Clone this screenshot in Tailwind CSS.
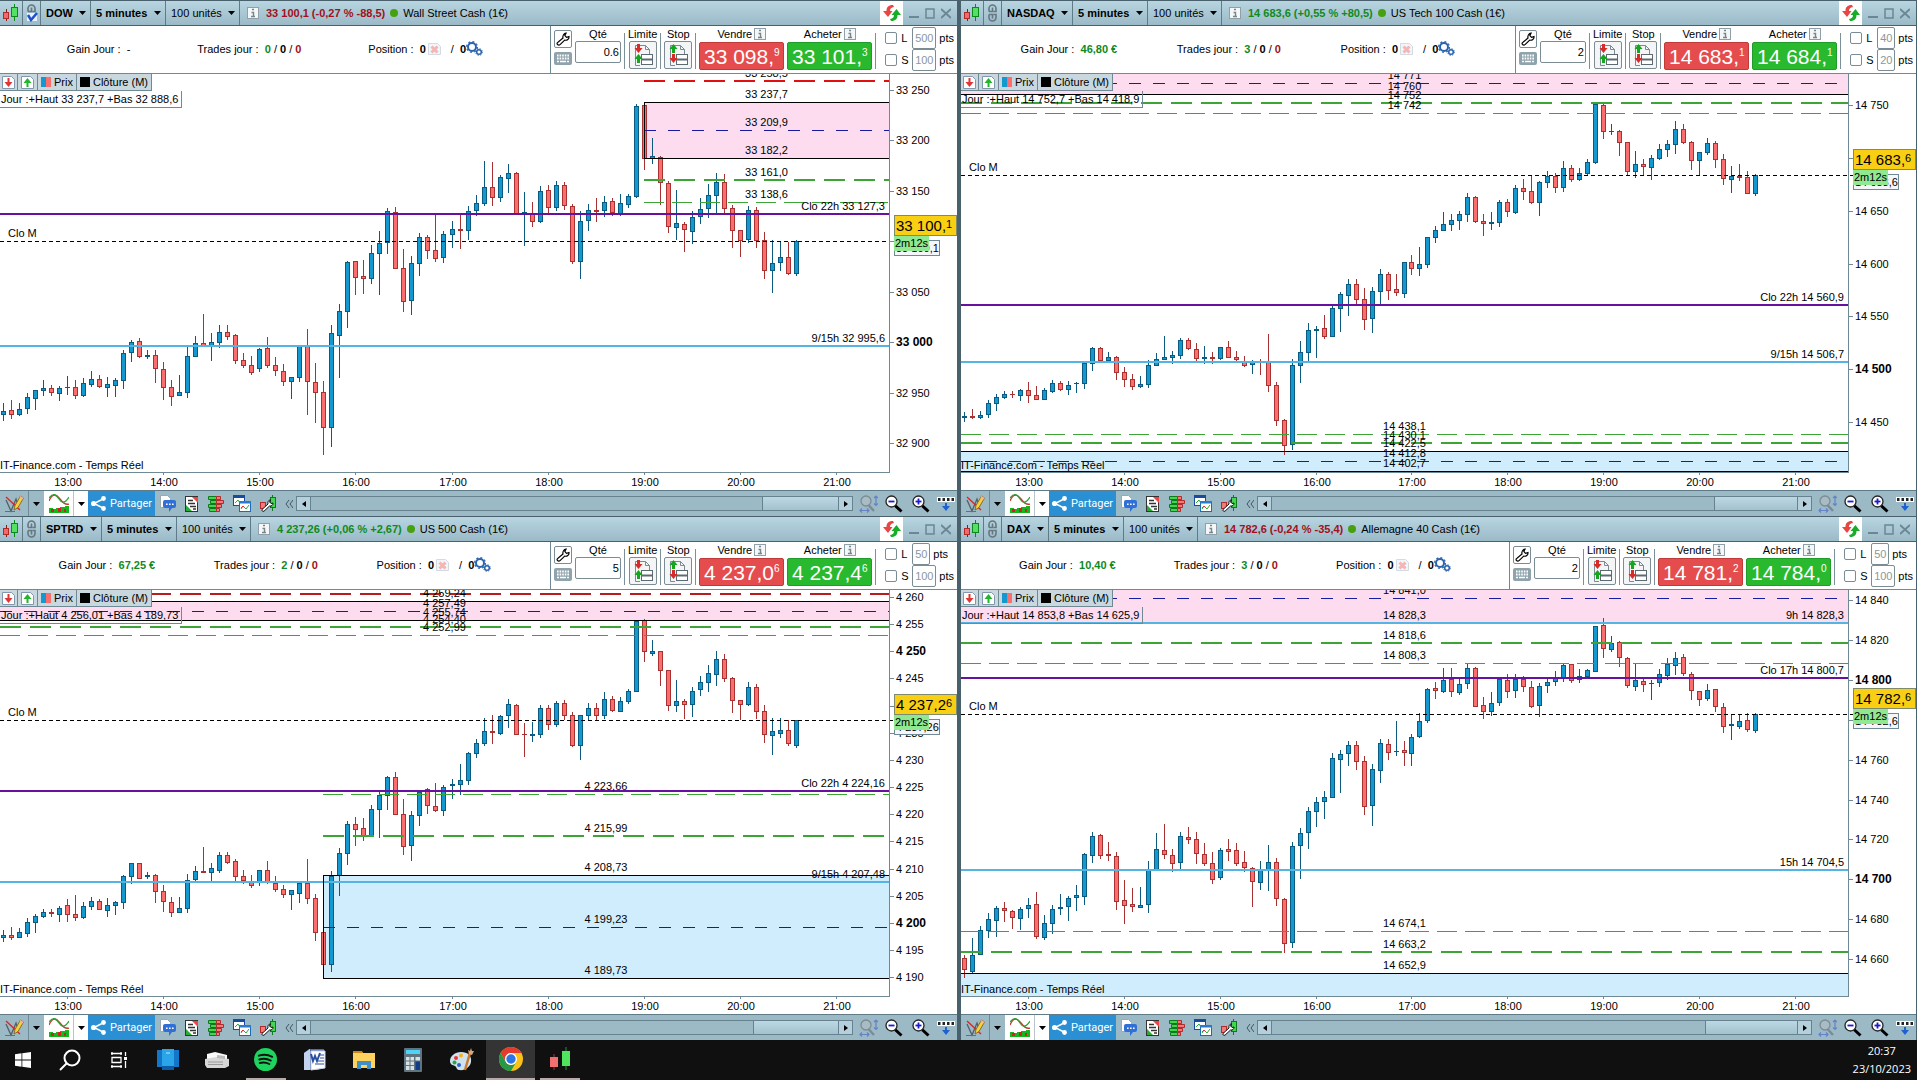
<!DOCTYPE html>
<html lang="fr">
<head>
    <meta charset="UTF-8">
    <meta name="viewport" content="width=device-width, initial-scale=1.0">
    <title>Graphiques - Temps Réel</title>
    <script src="https://cdn.jsdelivr.net/npm/@tailwindcss/browser@4"></script>
</head>
<body class="flex h-screen flex-col overflow-hidden bg-[#101010] font-['Liberation_Sans',Arial,sans-serif] text-[11px] leading-[14px] text-black">

    <!-- Icônes partagées -->
    <svg class="hidden">
        <symbol id="i-candles" viewBox="0 0 16 18">
            <path d="M4.5 5v12M12.500 1v15" stroke="#7a2020" fill="none"/>
            <path d="M12.500 0v17" stroke="#0a8a1a" fill="none"/>
            <rect x="1.500" y="8.500" width="5" height="6" fill="#f06a6a" stroke="#b02a2a"/>
            <rect x="9.500" y="3.500" width="6" height="9" fill="#55e065" stroke="#0a8a1a"/>
        </symbol>
        <symbol id="i-link" viewBox="0 0 12 18">
            <g fill="none" stroke="#66777f" stroke-width="1.600">
                <path d="M2 7.500V4.500a3.500 3.500 0 0 1 7 0v3H6.500M5.500 3.500v4H2"/>
                <path d="M2 10.500v3a3.500 3.500 0 0 0 7 0v-3H6.500M5.500 14.500v-4H2"/>
            </g>
        </symbol>
        <symbol id="i-check" viewBox="0 0 12 18">
            <path d="M2 7.500V4.500a3.500 3.500 0 0 1 7 0v3H6.500M5.500 3.500v4H2" fill="none" stroke="#66777f" stroke-width="1.600"/>
            <path d="M1 9h10v8H1z" fill="#e8f0ff"/>
            <path d="M2 11l3 5 6-7" fill="none" stroke="#1e50c8" stroke-width="2.500"/>
        </symbol>
        <symbol id="i-caret" viewBox="0 0 7 4"><path d="M0 0h7L3.500 4z" fill="#000"/></symbol>
        <symbol id="i-info" viewBox="0 0 12 12">
            <rect x=".5" y=".5" width="11" height="11" fill="#f4f6f7" stroke="#8fa0a8"/>
            <path d="M5 2.500h2M4.500 5.500H6.500V9M4 9.500h4" stroke="#76868d" stroke-width="1.400" fill="none"/>
        </symbol>
        <symbol id="i-refresh" viewBox="0 0 18 18">
            <path d="M10 1C5 1 3.500 3.500 3.500 7H0l5 6 4.500-6H7c0-2 .8-3.500 4-4z" fill="#e84545"/>
            <path d="M8 17c5 0 6.500-2.500 6.500-6H18l-4.500-6-5 6H11c0 2-.8 3.500-4 4z" fill="#18ad28"/>
        </symbol>
        <symbol id="i-gears" viewBox="0 0 17 15">
            <circle cx="6" cy="6" r="4" fill="none" stroke="#2a63ae" stroke-width="2"/>
            <circle cx="6" cy="6" r="5.400" fill="none" stroke="#2a63ae" stroke-width="1.200" stroke-dasharray="2 2.200"/>
            <circle cx="13" cy="11" r="2.300" fill="none" stroke="#2a63ae" stroke-width="1.500"/>
            <circle cx="13" cy="11" r="3.400" fill="none" stroke="#2a63ae" stroke-width=".9" stroke-dasharray="1.300 1.400"/>
        </symbol>
        <symbol id="i-cross" viewBox="0 0 13 12">
            <path d="M.5.500h9l3 3v8H.5z" fill="#f3f6f8" stroke="#d3dbe0"/>
            <path d="M3.500 3.500l6 6m0-6l-6 6" stroke="#f5b5b5" stroke-width="3"/>
        </symbol>
        <symbol id="i-wrench" viewBox="0 0 14 14">
            <path d="M1.500 12.500c-1-1 0-2 .5-2.200L7 6c-.6-2.500 1-4.500 3-4.800L8.800 3.500l1.700 1.900 2.500-.8c.2 2.400-2 4.200-4.300 3.500l-4.400 4.300c-1 .9-2 .8-2.800.1z" fill="#fff" stroke="#000" stroke-width="1.200"/>
        </symbol>
        <symbol id="i-keys" viewBox="0 0 18 13">
            <rect width="18" height="13" rx="2" fill="#8fa3ac"/>
            <path d="M3 3.500h12M3 6.500h12" stroke="#fff" stroke-width="2" stroke-dasharray="1.600 1"/>
            <path d="M3 9.500h2M6 9.500h6M13 9.500h2" stroke="#fff" stroke-width="1.600"/>
        </symbol>
        <symbol id="i-order" viewBox="0 0 24 24">
            <path d="M9 22.500H4.500v-20h10l4 4V11M14.500 2.500v4h4" fill="none" stroke="#7c8b91"/>
            <rect x="10.500" y="11.500" width="11" height="10" fill="#fff" stroke="#5d6b70"/>
            <path d="M11 16.500h10" stroke="#5d6b70" stroke-width="2"/>
        </symbol>
        <symbol id="i-limit" viewBox="0 0 24 24">
            <use href="#i-order"/>
            <path d="M6 1h3v4h2.500l-4 5-4-5H6z" fill="#d62b2b"/>
            <path d="M6 20h3v-4h2.500l-4-5-4 5H6z" fill="#16a51e"/>
        </symbol>
        <symbol id="i-stop" viewBox="0 0 24 24">
            <use href="#i-order"/>
            <path d="M6 10h3V6h2.500l-4-5-4 5H6z" fill="#16a51e"/>
            <path d="M6 11h3v4h2.500l-4 5-4-5H6z" fill="#d62b2b"/>
        </symbol>
        <symbol id="i-down" viewBox="0 0 13 13">
            <path d="M.5.500h9l3 3v9H.5z" fill="#fff" stroke="#8299ad"/>
            <path d="M5.500 2h2v4H10.500l-4 5-4-5h3z" fill="#e03535"/>
        </symbol>
        <symbol id="i-up" viewBox="0 0 13 13">
            <path d="M.5.500h9l3 3v9H.5z" fill="#fff" stroke="#8299ad"/>
            <path d="M5.500 11h2V7H10.500l-4-5-4 5h3z" fill="#25b52c"/>
        </symbol>
        <symbol id="i-draw" viewBox="0 0 19 18">
            <path d="M1 5l5 11 5-12 2 6" fill="none" stroke="#51606a" stroke-width="1.300"/>
            <path d="M1 2l14 13" stroke="#d22" stroke-width="1.300"/>
            <path d="M9 15l1-4.500L15.500 1l3 2L13 12.500z" fill="#f6d040" stroke="#7a5a10" stroke-width=".8"/>
            <path d="M15.500 1l3 2-1 1.600-3-2z" fill="#f4b2a0"/>
            <path d="M0 16.500h10" stroke="#2a9a32"/>
        </symbol>
        <symbol id="i-indic" viewBox="0 0 20 19">
            <path d="M0 7c4-9 8-6 11-2s6 6 9 5" fill="none" stroke="#c33" stroke-width="1.300"/>
            <path d="M0 4c4-5 7-4 10 1s6 4 10-2" fill="none" stroke="#2aa235" stroke-width="1.300"/>
            <path d="M0 19v-5h4v1h3v-1h4v-1h5v-1h4v7z" fill="#15b51e"/>
            <path d="M2 15h3v3H2zM9 14h3v4H9zM15 15h2v3h-2z" fill="#d62020"/>
        </symbol>
        <symbol id="i-share" viewBox="0 0 15 15">
            <path d="M13 2.500L3 7.500l10 5" fill="none" stroke="#fff" stroke-width="1.500"/>
            <circle cx="12.500" cy="2.500" r="2.400" fill="#fff"/><circle cx="2.600" cy="7.500" r="2.600" fill="#fff"/><circle cx="12.500" cy="12.500" r="2.400" fill="#fff"/>
        </symbol>
        <symbol id="i-chat" viewBox="0 0 16 17">
            <path d="M.5.500h7l3 3v9H.5z" fill="#fff" stroke="#9aaab2"/>
            <path d="M5 5h9a2 2 0 0 1 2 2v4a2 2 0 0 1-2 2h-2l-3 4v-4H5a2 2 0 0 1-2-2V7a2 2 0 0 1 2-2z" fill="#2f6fd6"/>
            <path d="M6 9.200h8" stroke="#fff" stroke-width="1.600" stroke-dasharray="1.600 1.400"/>
        </symbol>
        <symbol id="i-list" viewBox="0 0 14 16">
            <rect x=".5" y=".5" width="12" height="15" fill="#fff" stroke="#333"/>
            <path d="M7 1h6v6z" fill="#e44"/><path d="M1 15v-6l6 6z" fill="#2aab35"/>
            <path d="M3 4.500h5M3 7.500h7M5 10.500h6M8 13h3" stroke="#333" stroke-width="1.300"/>
        </symbol>
        <symbol id="i-book" viewBox="0 0 16 16">
            <path d="M.5.500h8v3h-8zM2.500 4.500h6v3h-6zM.5 8.500h8v3h-8zM1.500 12.500h7v3h-7z" fill="#46d552" stroke="#0d7a1b"/>
            <path d="M8.500.500h4v3h-4zM8.500 4.500h7v3h-7zM8.500 8.500h5v3h-5zM8.500 12.500h3v3h-3z" fill="#f37a7a" stroke="#b22a2a"/>
        </symbol>
        <symbol id="i-wins" viewBox="0 0 18 17">
            <rect x=".5" y=".5" width="11" height="10" fill="#fff" stroke="#1a4b9c"/><path d="M0 0h12v3H0z" fill="#1a4b9c"/>
            <path d="M2 8l3-3 2 3" fill="none" stroke="#2aab35"/>
            <rect x="6.500" y="6.500" width="11" height="10" fill="#fff" stroke="#1a6bb8"/><path d="M6 6h12v2.500H6z" fill="#2a7bd0"/>
            <path d="M8 14l2-3 3 3 3-4" fill="none" stroke="#2aab35"/><path d="M8 13l2-2 1 1" fill="none" stroke="#d33"/>
        </symbol>
        <symbol id="i-tool" viewBox="0 0 16 17">
            <rect x=".5" y="7.500" width="5" height="6" fill="#f37a7a" stroke="#b22a2a"/>
            <path d="M12.500 0v16" stroke="#0d7a1b"/><rect x="10.500" y="2.500" width="5" height="10" fill="#46d552" stroke="#0d7a1b"/>
            <path d="M2 14.500L8 9c-.5-2 .5-4 2.500-4.200L9.500 7l1.500 1.500L13 8c.2 2-1.500 3.500-3.500 3L4 16.200c-1.500.6-2.500-.7-2-1.700z" fill="#fff" stroke="#000" stroke-width=".9"/>
        </symbol>
        <symbol id="i-fit" viewBox="0 0 19 18">
            <path d="M9 9.500l6 6.500" stroke="#7b8c94" stroke-width="2.500"/>
            <circle cx="7" cy="6" r="5" fill="#a9bcc5" stroke="#7b8c94" stroke-width="1.300"/>
            <path d="M17 1v9M15 3l2-2 2 2M15 8.500l2 2 2-2M1 15.500h9M3 13.500l-2 2 2 2M8 13.500l2 2-2 2" fill="none" stroke="#6483c8" stroke-width="1.200"/>
        </symbol>
        <symbol id="i-lens" viewBox="0 0 18 18">
            <path d="M10 10.500l6.500 6" stroke="#000" stroke-width="3"/>
            <circle cx="6.500" cy="6.500" r="5.500" fill="#fff" stroke="#222" stroke-width="1.300"/>
            <path d="M3.500 6.500h6" stroke="#1a1ad0" stroke-width="1.800"/>
        </symbol>
        <symbol id="i-lens-plus" viewBox="0 0 18 18"><use href="#i-lens"/><path d="M6.500 3.500v6" stroke="#1a1ad0" stroke-width="1.800"/></symbol>
        <symbol id="i-dock" viewBox="0 0 18 14">
            <rect width="18" height="5" fill="#fff"/><path d="M1 2.500h16" stroke="#222" stroke-width="3" stroke-dasharray="2.500 2"/>
            <path d="M8 6h2v3h3l-4 5-4-5h3z" fill="#1c62d0"/>
        </symbol>
    </svg>

    <main id="desk" class="grid min-h-0 flex-1 grid-cols-[959fr_958fr] grid-rows-[516fr_524fr] bg-white"></main>

    <!-- Barre des tâches -->
    <footer class="flex h-10 shrink-0 items-stretch bg-[#101010] text-white">
        <button aria-label="Démarrer" class="flex w-[45px] items-center justify-center">
            <svg class="h-4 w-4" viewBox="0 0 16 16" fill="#fff"><path d="M0 2.200l6.500-.9v6.300H0zM7.300 1.200L16 0v7.600H7.300zM0 8.400h6.500v6.300L0 13.800zM7.300 8.400H16V16l-8.700-1.200z"/></svg>
        </button>
        <button aria-label="Rechercher" class="flex w-[49px] items-center justify-center">
            <svg class="h-6 w-6" viewBox="0 0 24 24" fill="none" stroke="#fff" stroke-width="2"><circle cx="14" cy="10" r="7.500"/><path d="M8.500 15.500L2 22"/></svg>
        </button>
        <button aria-label="Vue des tâches" class="flex w-[49px] items-center justify-center">
            <svg class="h-4 w-4" viewBox="0 0 16 16" fill="none" stroke="#fff" stroke-width="1.300"><path d="M0 1.500h11M0 14.500h11M1 0v3M10 0v3M1 13v3M10 13v3M1 5.500h9v5H1zM14.500 0v4M14.500 9v7"/><path d="M13 5h3v3h-3z" fill="#fff" stroke="none"/></svg>
        </button>
        <button aria-label="Ordinateur" class="flex w-[49px] items-center justify-center">
            <svg class="h-[22px] w-[22px]" viewBox="0 0 22 22"><path d="M0 1h22v14l1 3H0z" fill="#1476c8"/><rect x="5" width="12" height="17" fill="#2aa5ea"/><rect x="5" y="17" width="12" height="4" fill="#0b5da8"/><path d="M9 4h4" stroke="#bfe6ff"/></svg>
        </button>
        <button aria-label="Imprimante" class="flex w-[49px] items-center justify-center">
            <svg class="h-[22px] w-6" viewBox="0 0 24 22"><path d="M2 5l8-2 12 3v5H2z" fill="#fafafa"/><path d="M0 10l12-2 12 2v7l-4 2H2l-2-3z" fill="#d7d7d7"/><path d="M3 13h15M3 15.500h15" stroke="#9a9a9a"/><path d="M12 6l8 1v3l-8-1z" fill="#bbb"/></svg>
        </button>
        <button aria-label="Spotify" class="flex w-[49px] items-center justify-center">
            <span class="flex h-full w-10 items-center justify-center border-b-2 border-[#b9aaa8]">
                <svg class="h-[23px] w-[23px]" viewBox="0 0 24 24"><circle cx="12" cy="12" r="12" fill="#1ed45f"/><path d="M5 8c5-1.500 10-1 14 1.200M5.500 12c4.500-1.300 8.500-.8 12 1.100M6 15.700c3.500-1 7-.6 10 1" fill="none" stroke="#101010" stroke-width="2" stroke-linecap="round"/></svg>
            </span>
        </button>
        <button aria-label="Word" class="flex w-[49px] items-center justify-center">
            <svg class="h-[22px] w-[23px]" viewBox="0 0 23 22"><path d="M1 4l5-4h15v18l-6 3H1z" fill="#4b6cb4"/><path d="M8 2h14v17L8 21z" fill="#fff" stroke="#c9d4ea"/><path d="M8 5l2 7 2-5 2 5 3-8" fill="none" stroke="#2b4f9e" stroke-width="2"/><path d="M17 6h4M17 9h4M15 12h6M12 15h9" stroke="#2b4f9e"/><path d="M1 4l6-4v21H1z" fill="#c5d2ee"/></svg>
        </button>
        <button aria-label="Explorateur de fichiers" class="flex w-[49px] items-center justify-center">
            <svg class="h-5 w-[22px]" viewBox="0 0 22 20"><path d="M0 1h9l2 3H0z" fill="#c78a17"/><path d="M0 3h22v15H0z" fill="#fbd35e"/><path d="M4 19v-8h14v8h-4v-4H8v4z" fill="#3f8fc9"/></svg>
        </button>
        <button aria-label="Calculatrice" class="flex w-[49px] items-center justify-center">
            <svg class="h-6 w-[18px]" viewBox="0 0 18 24"><rect width="18" height="24" rx="1" fill="#5f7480"/><rect x="2" y="2" width="14" height="4" fill="#4fd3f5"/><path d="M2 9h3.500v3.500H2zM6.500 9H10v3.500H6.500zM2 13.500h3.500V17H2zM6.500 13.500H10V17H6.500zM2 18h3.500v4H2zM6.500 18H10v4H6.500zM11.500 9H16v3.500h-4.500z" fill="#d9e0e4"/><path d="M11.500 13.500H16V22h-4.500z" fill="#113e86"/></svg>
        </button>
        <button aria-label="Paint" class="flex w-[49px] items-center justify-center">
            <svg class="h-6 w-6" viewBox="0 0 24 24"><path d="M11 4c7 0 11 4 10 10-1 5-6 9-12 8-3-.5-2-3-4-4s-5-1-5-5c0-5 5-9 11-9z" fill="#cfe2f0"/><circle cx="6" cy="10" r="2" fill="#e33"/><circle cx="11" cy="7.500" r="2" fill="#f6b21a"/><circle cx="4.500" cy="14.500" r="2" fill="#2fa63b"/><circle cx="9" cy="17" r="2" fill="#2b62d0"/><path d="M20 5l-5 17" stroke="#c97a2c" stroke-width="2.500"/><path d="M19 6l-1-4 2 1 1-3 1 3 2 0-2 4z" fill="#d9a878"/></svg>
        </button>
        <button aria-label="Google Chrome" class="flex w-[49px] items-center justify-center border-b-2 border-[#b9aaa8] bg-[#343434]">
            <svg class="h-6 w-6" viewBox="0 0 24 24"><circle cx="12" cy="12" r="12" fill="#fbc116"/><path d="M1.600 6A12 12 0 0 1 22.400 6H12a6 6 0 0 0-5.200 9z" fill="#e33b2e"/><path d="M1.600 6A12 12 0 0 0 12 24l5.200-9a6 6 0 0 1-10.400 0z" fill="#279847"/><circle cx="12" cy="12" r="6" fill="#fff"/><circle cx="12" cy="12" r="4.700" fill="#2d74e7"/></svg>
        </button>
        <button aria-label="Plateforme de trading" class="flex w-[49px] items-center justify-center">
            <span class="flex h-full w-10 items-center justify-center border-b-2 border-[#b9aaa8]">
                <svg class="h-6 w-5" viewBox="0 0 20 24"><path d="M4 7v16" stroke="#a33"/><path d="M16 0v23" stroke="#1b9a2a"/><rect y="10" width="8" height="10" fill="#f07070"/><rect x="12" y="4" width="8" height="15" fill="#4fe35f"/></svg>
            </span>
        </button>
        <div class="ml-auto flex flex-col justify-center pr-1.5 text-center font-['Open_Sans',sans-serif] text-[11px] leading-[18px]">
            <time>20:37</time>
            <time>23/10/2023</time>
        </div>
    </footer>

    <script>
        // bars : [sens, haut, sommet du corps, bas du corps, bas], k unités par pixel depuis y0
        const panels = [
            {
                code: 'DOW', linked: true, price: '33 100,1 (-0,27 % -88,5)', up: false, name: 'Wall Street Cash (1€)',
                gain: '-', trades: 0, qty: '0.6', sell: ['33 098,', '9'], buy: ['33 101,', '3'], L: 500, S: 100,
                day: '+Haut 33 237,7 +Bas 32 888,6', last: ['33 100,', '1'], lastFull: '33 100,1',
                close: 167, h: 398, thumb: 76,
                axis: { from: 33250, to: 32900, step: 50, y: 16, px: 1.0086, bold: [33000] },
                zones: [[644, 28, 84, '#fcdcee']],
                levels: [
                    ['red', 644, 7, '33 258,5'], ['black', 644, 28, '33 237,7'], ['navy', 644, 56, '33 209,9'], ['black', 644, 84, '33 182,2'],
                    ['thick', 644, 106, '33 161,0'], ['thin', 644, 128, '33 138,6'],
                    ['purple', 0, 140, '', 'Clo 22h 33 127,3'], ['blue', 0, 272, '', '9/15h 32 995,6']
                ],
                bars: [{ y0: -4, k: 3, d: `u 998 1023 1034 1052,d 990 1020 1034 1046,u 999 1017 1034 1037,u 969 981 1016 1031,u 960 961 986 1019,u 930 954 962 977,d 945 954 968 977,u 948 954 971 992,u 918 951 955 974,d 930 951 977 986,u 924 939 977 980,u 903 927 944 950,d 915 927 950 953,u 921 942 953 980,u 924 930 947 980,u 840 849 932 956,u 810 816 848 876,d 804 813 860 863,u 840 855 860 866,d 840 855 896 938,d 876 897 953 990,d 930 951 980 1007,u 915 966 977 977,u 830 858 968 984,u 797 819 860 860,d 732 819 827 828,u 789 816 828 872,u 765 786 818 833,d 765 786 800 810,d 792 795 872 881,d 849 870 887 893,d 857 885 908 914,u 834 837 896 906,d 800 834 887 893,d 861 885 902 917,d 882 903 935 948,u 921 921 935 987,u 828 828 923 935,d 777 828 935 1035,d 878 936 968 1059,d 933 966 1073 1155,u 765 789 1073 1131,u 702 723 797 924,u 573 576 725 774,d 573 573 623 675,d 570 618 626 672,u 524 549 626 642,u 483 519 551 675,u 414 423 518 551,d 410 426 596 597,d 537 594 695 726,u 558 579 692 735,u 489 501 581 618,d 495 501 542 567,d 432 540 566 575,u 483 492 563 578,u 453 477 494 533,d 428 477 482 537,u 408 423 482 510,u 375 399 422 437,u 273 351 401 408,d 276 351 383 407,u 316 321 383 396,u 282 309 326 369,d 306 309 431 432,u 366 426 431 528,d 396 429 455 471,u 348 363 455 459,d 345 360 413 430,u 333 345 413 422,d 336 345 407 419,d 402 408 575 582,u 423 453 575 627,u 402 420 452 483,d 384 420 425 456,u 378 396 422 440,d 384 393 430 437,u 372 399 431 437,u 372 378 404 413,u 102 108 380 383,d 102 105 266 299,u 204 258 266 281,d 258 261 338 404,d 333 339 470 489,u 360 459 473 510,d 456 462 479 546,u 423 441 485 522,u 384 417 440 461,u 342 375 416 443,u 309 336 377 431,d 312 336 416 430,d 405 414 482 534,d 480 480 512 560,u 408 420 509 518,d 411 420 512 533,d 486 510 602 627,u 510 579 602 669,u 516 561 578 602,d 516 561 611 614,u 510 513 611 617` }]
            },
            {
                code: 'NASDAQ', price: '14 683,6 (+0,55 % +80,5)', up: true, name: 'US Tech 100 Cash (1€)',
                gain: '46,80 €', trades: 3, qty: '2', sell: ['14 683,', '1'], buy: ['14 684,', '1'], L: 40, S: 20,
                day: '+Haut 14 752,7 +Bas 14 418,9', last: ['14 683,', '6'], lastFull: '14 683,6',
                close: 101, h: 398, thumb: 83,
                axis: { from: 14750, to: 14450, step: 50, y: 31, px: 1.057, bold: [14500] },
                zones: [[0, 0, 20, '#fcdcee'], [0, 377, 397, '#cfedfd']],
                levels: [
                    ['navy', 0, 9, '14 771'], ['black', 0, 20, '14 760'], ['thick', 0, 29, '14 752'], ['thin', 0, 39, '14 742'],
                    ['purple', 0, 231, '', 'Clo 22h 14 560,9'], ['blue', 0, 288, '', '9/15h 14 506,7'],
                    ['thin', 0, 360, '14 438,1'], ['thick', 0, 369, '14 430,1'], ['black', 0, 377, '14 422,5'], ['navy', 0, 387, '14 412,8'], ['black', 0, 397, '14 402,7']
                ],
                bars: [{ y0: -4, k: 3, d: `u 1026 1038 1043 1055,d 1017 1038 1043 1046,u 1023 1035 1043 1046,u 990 999 1034 1043,u 972 981 1001 1022,u 963 972 983 986,d 963 971 976 984,u 957 961 977 992,d 936 960 977 998,d 948 975 989 990,u 954 960 989 990,u 930 939 965 968,d 933 939 959 962,u 933 945 959 974,u 936 939 943 968,u 875 879 941 956,u 831 834 881 903,d 831 834 872 873,u 846 860 872 875,d 857 860 908 930,d 891 906 929 950,d 912 927 950 959,u 918 942 950 953,u 870 885 944 953,u 849 866 887 887,u 798 861 869 870,u 842 855 863 881,u 803 810 857 866,d 803 810 838 839,d 819 837 866 875,u 828 861 866 881,d 846 861 866 881,u 831 831 866 869,d 813 831 863 864,d 843 861 871 875,d 857 872 887 890,u 870 876 884 911,d 867 877 880 915,d 792 877 947 965,d 936 945 1052 1067,d 1047 1050 1127 1154,u 867 885 1124 1139,u 813 846 887 938,u 759 780 849 875,u 768 777 782 864,d 735 774 800 806,u 705 714 800 800,u 666 672 716 786,u 627 642 677 738,d 627 642 689 705,d 654 687 749 780,u 651 663 746 789,u 597 612 665 705,d 606 612 662 689,d 612 657 668 677,u 576 576 671 683,d 555 576 597 614,u 531 582 596 617,u 501 501 584 593,u 468 480 503 518` },
                    { y0: -74, k: 2.958, d: `u 627 663 682 682,u 633 651 665 682,u 625 633 653 680,u 571 583 635 658,d 580 583 656 659,d 633 654 662 697,u 627 656 662 680,u 592 598 660 671,d 589 598 627 641,u 547 556 630 633,d 530 556 567 591,d 518 565 600 603,u 535 538 600 638,u 506 521 541 556,d 512 521 556 571,u 476 497 556 568,d 488 497 532 538,u 497 512 532 535,u 470 479 514 517,u 308 308 482 485,d 308 311 390 410,u 366 387 391 399,d 385 388 423 461,d 420 420 508 517,u 447 485 508 526,d 470 485 493 517,u 458 467 496 532,u 426 441 469 472,u 414 426 443 463,u 358 382 428 455,d 367 382 423 425,d 417 420 475 502,u 450 450 475 518,u 408 423 453 458,d 417 423 472 497,d 456 470 529 547,u 491 520 532 571,d 485 520 526 535,d 506 523 573 574,u 515 518 573 580` }]
            },
            {
                code: 'SPTRD', price: '4 237,26 (+0,06 % +2,67)', up: true, name: 'US 500 Cash (1€)',
                gain: '67,25 €', trades: 2, qty: '5', sell: ['4 237,0', '6'], buy: ['4 237,4', '6'], L: 50, S: 100,
                day: '+Haut 4 256,01 +Bas 4 189,73', last: ['4 237,2', '6'], lastFull: '4 237,26',
                close: 130, h: 406, thumb: 85,
                axis: { from: 4260, to: 4190, step: 5, y: 7, px: 5.433, bold: [4250, 4200] },
                zones: [[0, 11, 30, '#fcdcee'], [323, 285, 388, '#cfedfd']],
                levels: [
                    ['darkred', 0, 4, ''], ['black', 0, 11, '4 259,24'], ['navy', 0, 21, '4 257,49'], ['black', 0, 30, '4 255,74'], ['thick', 0, 37, '4 254,40'], ['thin', 0, 45, '4 252,99'],
                    ['purple', 0, 201, '', 'Clo 22h 4 224,16'], ['thin', 323, 204, '4 223,66'], ['thick', 323, 246, '4 215,99'], ['black', 323, 285, '4 208,73'],
                    ['blue', 0, 292, '', '9/15h 4 207,48'], ['navy', 323, 337, '4 199,23'], ['black', 323, 388, '4 189,73']
                ],
                bars: [{ y0: -110, k: 2.825, d: `u 1270 1284 1294 1304,d 1264 1284 1294 1300,u 1266 1277 1294 1295,u 1238 1249 1283 1291,u 1227 1232 1252 1280,u 1213 1221 1234 1236,d 1213 1220 1227 1235,u 1204 1210 1228 1248,d 1184 1201 1228 1248,d 1173 1226 1237 1246,u 1192 1204 1237 1240,u 1178 1190 1205 1214,d 1184 1190 1214 1215,u 1181 1201 1217 1235,u 1189 1192 1204 1228,u 1115 1119 1194 1212,u 1082 1082 1121 1140,d 1082 1082 1126 1127,u 1106 1117 1121 1128,d 1112 1117 1163 1195,d 1144 1161 1192 1221,d 1178 1192 1222 1235,u 1178 1209 1222 1223,u 1112 1130 1211 1222,u 1091 1105 1130 1135,d 1037 1104 1109 1110,u 1082 1096 1109 1132,u 1051 1060 1105 1110,d 1051 1060 1081 1085,d 1071 1077 1121 1132,d 1103 1119 1132 1140,d 1116 1132 1146 1153,u 1102 1103 1139 1146,d 1076 1102 1139 1140,d 1119 1138 1157 1163,d 1144 1155 1171 1180,u 1158 1158 1171 1215,u 1136 1138 1169 1195,d 1071 1138 1183 1197,d 1170 1182 1279 1302,d 1270 1278 1369 1370,u 1105 1118 1369 1390,u 1040 1054 1118 1175,u 963 971 1056 1088,d 951 971 989 1034,d 955 983 1005 1020,u 918 930 1005 1006,u 881 890 932 1010,u 836 839 892 932,d 825 839 945 946,d 901 944 1036 1058,u 935 947 1033 1075,u 880 881 949 978,d 870 874 922 944,d 856 921 935 938,u 862 867 935 949,u 845 860 864 901,u 801 848 861 889,u 768 771 850 862,u 732 743 773 785` },
                    { y0: -80, k: 2.958, d: `u 615 654 691 697,d 606 654 661 691,u 606 609 662 665,u 559 574 608 645,d 573 577 665 666,d 630 662 667 731,u 627 662 668 686,u 577 586 665 674,d 577 586 635 651,u 565 571 636 641,d 562 571 608 622,d 597 606 699 700,u 605 606 699 740,u 571 586 608 624,d 571 586 609 622,u 538 559 608 617,d 550 559 594 597,u 553 565 597 598,u 530 535 567 573,u 326 328 537 538,d 322 326 419 450,u 385 417 426 431,d 417 418 475 520,d 473 474 579 594,u 503 565 579 598,d 559 565 576 618,u 524 536 576 612,u 491 509 532 549,u 459 482 511 538,u 417 441 487 520,d 426 441 499 509,d 494 497 564 600,d 562 562 576 622,u 509 524 577 580,d 515 524 597 619,d 577 595 667 688,u 615 654 668 725,u 615 651 662 674,d 622 651 691 697,u 622 622 697 703` }]
            },
            {
                code: 'DAX', price: '14 782,6 (-0,24 % -35,4)', up: false, name: 'Allemagne 40 Cash (1€)',
                gain: '10,40 €', trades: 3, qty: '2', sell: ['14 781,', '2'], buy: ['14 784,', '0'], L: 50, S: 100,
                day: '+Haut 14 853,8 +Bas 14 625,9', last: ['14 782,', '6'], lastFull: '14 782,6',
                close: 124, h: 406, thumb: 92,
                axis: { from: 14840, to: 14660, step: 20, y: 10, px: 1.9955, bold: [14800, 14700] },
                zones: [[0, 0, 33, '#fcdcee'], [0, 383, 406, '#cfedfd']],
                levels: [
                    ['navy', 0, 8, '14 841,0'], ['blue', 0, 33, '14 828,3', '9h 14 828,3'], ['thick', 0, 53, '14 818,6'], ['thin', 0, 73, '14 808,3'],
                    ['purple', 0, 88, '', 'Clo 17h 14 800,7'], ['blue', 0, 280, '', '15h 14 704,5'],
                    ['thin', 0, 341, '14 674,1'], ['thick', 0, 362, '14 663,2'], ['black', 0, 383, '14 652,9']
                ],
                bars: [{ y0: -80, k: 2.958, d: `d 1316 1325 1361 1385,u 1266 1316 1367 1370,u 1230 1243 1316 1317,u 1192 1210 1246 1266,u 1172 1177 1215 1263,d 1160 1177 1186 1218,d 1183 1186 1207 1240,u 1174 1180 1210 1243,u 1147 1169 1180 1207,d 1130 1166 1263 1269,u 1198 1221 1266 1272,u 1169 1180 1224 1254,u 1136 1175 1180 1198,u 1142 1148 1174 1216,u 1109 1139 1147 1186,u 1015 1018 1145 1168,u 953 964 1024 1044,d 959 962 1024 1033,d 983 1018 1023 1039,d 1012 1024 1160 1183,d 1094 1154 1171 1225,d 1118 1166 1175 1189,u 1116 1169 1177 1178,u 1038 1065 1168 1192,u 956 1003 1065 1066,d 929 1006 1021 1032,d 1003 1021 1047 1071,u 953 964 1044 1063,d 938 967 977 988,d 953 973 1018 1047,d 986 1018 1047 1053,d 1012 1045 1095 1106,u 1001 1006 1089 1094,d 974 1003 1012 1038,d 985 1006 1047 1054,d 1009 1042 1060 1071,d 1057 1060 1101 1175,u 1038 1065 1104 1124,u 991 1042 1065 1127,d 1030 1042 1151 1171,d 1148 1151 1284 1311,u 982 994 1281 1296,u 941 956 994 1092,u 879 891 956 1003,u 850 864 893 938,u 831 850 863 914,u 719 734 852 852,u 710 722 740 837,u 684 695 722 757,d 684 695 746 769,d 729 743 879 902,u 751 766 876 935,u 678 689 772 808,d 678 692 719 740,u 624 712 716 728,d 684 710 719 757,u 663 672 722 757,u 601 624 672 675,u 527 530 624 630,d 509 527 536 559` },
                    { y0: -80, k: 2.751, d: `u 436 467 500 503,d 436 464 500 514,u 459 479 503 509,u 423 434 478 492,d 431 434 542 543,d 514 536 557 574,u 501 531 556 566,u 462 465 531 539,d 451 467 500 517,u 451 464 498 516,d 458 464 487 500,d 470 487 542 544,u 476 484 539 569,u 459 473 484 503,u 442 460 472 484,u 423 426 464 473,d 424 424 470 475,u 437 457 469 475,u 437 440 459 460,u 319 319 445 446,d 297 316 382 407,u 347 366 385 392,d 360 363 407 431,d 404 407 484 489,u 424 467 487 498,d 464 470 481 500,u 468 475 480 523,u 437 451 475 487,u 407 423 457 467,u 391 407 429 453,d 396 404 451 457,d 446 451 497 522,d 498 498 522 539,u 479 495 520 525,d 492 492 542 556,d 531 542 598 613,u 562 590 595 633,u 564 580 598 602,d 559 578 605 611,u 559 562 607 613` }]
            }
        ];

        const icon = (id, cls) => `<svg class="${cls} shrink-0"><use href="#i-${id}"/></svg>`;
        const desk = document.getElementById('desk');

        function dropdown(label, value, weight) {
            return `<label class="flex items-center gap-1.5 border-r border-[#5f7b87] pl-[5px] pr-1">
                <select aria-label="${label}" class="appearance-none bg-transparent text-[11px] ${weight}"><option>${value}</option></select>
                ${icon('caret', 'h-1 w-[7px]')}
            </label>`;
        }

        function orderButton(id, label) {
            return `<div class="flex flex-col items-center">
                <span class="mt-px">${label}</span>
                <button aria-label="${label}" class="flex h-7 w-7 items-center justify-center rounded-xs border border-[#7b8c94] bg-[#f3f5f6]">${icon(id, 'h-6 w-6')}</button>
            </div>`;
        }

        function quote(label, value, color) {
            return `<div class="flex w-[85px] flex-col items-center">
                <span class="mt-px flex items-center gap-0.5">${label} ${icon('info', 'h-3 w-3')}</span>
                <button class="mt-px flex h-7 w-full items-start justify-center rounded-xs border pt-0.5 text-[21px] leading-6 whitespace-nowrap text-white ${color}">${value[0]}<sup class="top-0 pt-0.5 text-[10px] leading-[12px]">${value[1]}</sup></button>
            </div>`;
        }

        function limitRow(key, value, n) {
            const w = value > 99 ? 'w-6' : 'w-[18px]';
            return `<div class="flex items-center">
                <input type="checkbox" id="${key}${n}" class="h-3 w-3 appearance-none rounded-xs border border-[#7b8c94] bg-white">
                <label for="${key}${n}" class="w-[15px] pl-1">${key}</label>
                <input type="text" value="${value}" aria-label="Points ${key}" class="${w} h-[22px] rounded-xs border border-[#7b8c94] text-center text-[11px] text-[#8b979c]">
                <span class="pl-[3px]">pts</span>
            </div>`;
        }

        const sep = '<span class="mt-[7px] h-9 w-px bg-[#7b9099]"></span>';

        function panelHtml(p, n) {
            const tone = p.up ? 'text-[#108a1c]' : 'text-[#a01020]';
            const side = n % 2 ? 'border-l-2 border-r' : 'border-r-2';
            const gain = p.gain === '-' ? '<b class="font-normal">-</b>' : `<b class="text-[#108a1c]">${p.gain}</b>`;
            return `<section class="flex min-h-0 min-w-0 flex-col border-[#48616c] ${side}">
                <header class="flex h-[26px] shrink-0 items-stretch border-y border-[#48616c] bg-linear-to-b from-[#b8d5e1] to-[#9bbac7]">
                    <button aria-label="Style" class="flex w-[23px] items-center border-r border-[#5f7b87] pl-0.5">${icon('candles', 'h-[18px] w-4')}</button>
                    <button aria-label="Lier" class="flex w-[18px] items-center justify-center border-r border-[#5f7b87]">${icon(p.linked ? 'check' : 'link', 'h-[18px] w-3')}</button>
                    ${dropdown('Valeur', p.code, 'font-bold')}
                    ${dropdown('Unité de temps', '5 minutes', 'font-bold')}
                    ${dropdown('Historique', '100 unités', 'font-normal')}
                    <div class="flex min-w-0 flex-1 items-center gap-[5px] pl-[7px] whitespace-nowrap">
                        ${icon('info', 'h-3 w-3')}
                        <b class="pl-0.5 ${tone}">${p.price}</b>
                        <span class="h-2 w-2 rounded-full bg-[#46a010]"></span>
                        <span>${p.name}</span>
                    </div>
                    <button aria-label="Rafraîchir" class="flex w-[23px] items-center justify-center bg-white">${icon('refresh', 'h-[18px] w-[18px]')}</button>
                    <div class="flex items-center gap-1.5 px-1.5">
                        <button aria-label="Réduire"><svg class="h-3 w-2.5"><path d="M0 10h10" stroke="#6b8794" stroke-width="2"/></svg></button>
                        <button aria-label="Agrandir"><svg class="h-3 w-2.5"><path d="M1 2h8v9H1z" fill="none" stroke="#6b8794" stroke-width="1.500"/></svg></button>
                        <button aria-label="Fermer"><svg class="h-3 w-2.5"><path d="M0 2l10 9M10 2L0 11" stroke="#6b8794" stroke-width="2"/></svg></button>
                    </div>
                </header>
                <div class="flex h-12 shrink-0 border-b border-[#6f8a95] bg-white whitespace-nowrap">
                    <div class="flex flex-1 items-center justify-evenly pb-0.5">
                        <div>Gain Jour :&nbsp; ${gain}</div>
                        <div>Trades jour :&nbsp; <b class="text-[#108a1c]">${p.trades}</b> / <b>0</b> / <b class="text-[#a01020]">0</b></div>
                        <div class="flex items-center">Position :&nbsp;&nbsp; <b class="pr-0.5">0</b>${icon('cross', 'h-3 w-[13px]')}<span class="pl-2.5">/&nbsp; <b>0</b></span>${icon('gears', 'h-[15px] w-[17px]')}</div>
                    </div>
                    <div class="flex gap-[3px] border-l border-[#6f8a95] pl-[3px]">
                        <div class="flex flex-col gap-1 pt-1">
                            <button aria-label="Réglages" class="flex h-[18px] w-[18px] items-center justify-center rounded-xs border border-[#7b8c94] bg-white">${icon('wrench', 'h-3.5 w-3.5')}</button>
                            <button aria-label="Clavier">${icon('keys', 'h-[13px] w-[18px]')}</button>
                        </div>
                        <div class="flex flex-col items-center">
                            <label for="qty${n}" class="mt-px">Qté</label>
                            <input id="qty${n}" type="text" value="${p.qty}" class="h-[22px] w-[46px] rounded-xs border border-[#7b8c94] pr-px text-right text-[11px]">
                        </div>
                        ${sep}${orderButton('limit', 'Limite')}${sep}${orderButton('stop', 'Stop')}${sep}
                        ${quote('Vendre', p.sell, 'border-[#c03a3a] bg-[#e54c4e]')}
                        ${quote('Acheter', p.buy, 'border-[#1f9c2a] bg-[#28b92f]')}
                        ${sep}
                        <div class="flex flex-col pt-px pr-[3px] pl-1.5">${limitRow('L', p.L, n)}${limitRow('S', p.S, n)}</div>
                    </div>
                </div>
                <div class="relative min-h-0 flex-1 bg-white">
                    <svg class="chart absolute inset-0 h-full w-full text-[11px]" role="img" aria-label="Graphique ${p.code}"></svg>
                    <div class="absolute top-0 left-0">
                        <div class="flex h-[17px] w-fit items-stretch border-b border-[#6f8a95] bg-[#c9d8de]">
                            <button aria-label="Descendre" class="flex w-[18px] items-center justify-center border-r border-[#6f8a95]">${icon('down', 'h-[13px] w-[13px]')}</button>
                            <button aria-label="Monter" class="flex w-5 items-center justify-center border-r border-[#6f8a95]">${icon('up', 'h-[13px] w-[13px]')}</button>
                            <button class="flex items-center border-r border-[#6f8a95] px-[3px]"><i class="h-2.5 w-[5px] bg-[#1398cf]"></i><i class="mr-[3px] h-2.5 w-[5px] bg-[#fa6e6e]"></i>Prix</button>
                            <button class="flex items-center gap-[3px] border-r border-[#6f8a95] px-[3px]"><i class="h-2.5 w-2.5 bg-black"></i>Clôture (M)</button>
                        </div>
                        <div class="h-[17px] w-fit border-r border-b border-[#6f8a95] pr-[3px] pl-px leading-[16px]">Jour :${p.day}</div>
                    </div>
                </div>
                <div class="flex h-[26px] shrink-0 items-stretch border-t border-[#5f7b87] bg-[#9cb9c6]">
                    <button aria-label="Dessiner" class="flex w-[29px] items-center justify-center border-r border-[#6f8a95]">${icon('draw', 'h-[18px] w-[19px]')}</button>
                    <button aria-label="Outils" class="flex w-[15px] items-center justify-center">${icon('caret', 'h-1 w-[7px]')}</button>
                    <button aria-label="Indicateurs" class="flex w-[30px] items-center justify-center border-r border-[#b8c6cc] bg-white">${icon('indic', 'h-[19px] w-5')}</button>
                    <button aria-label="Liste des indicateurs" class="flex w-3.5 items-center justify-center bg-white">${icon('caret', 'h-1 w-[7px]')}</button>
                    <button class="flex w-[67px] items-center justify-center gap-1 bg-[#2b8fd3] font-['Roboto',sans-serif] text-[11px] text-white">${icon('share', 'h-[15px] w-[15px]')}Partager</button>
                    <div class="flex items-center gap-[9px] pr-[3px] pl-[5px]">
                        <button aria-label="Messages">${icon('chat', 'h-[17px] w-4')}</button>
                        <button aria-label="Ordres">${icon('list', 'h-4 w-3.5')}</button>
                        <button aria-label="Carnet">${icon('book', 'h-4 w-4')}</button>
                        <button aria-label="Fenêtres">${icon('wins', 'h-[17px] w-[18px]')}</button>
                        <button aria-label="Configurer">${icon('tool', 'h-[17px] w-4')}</button>
                        <button aria-label="Replier"><svg class="h-2 w-2"><path d="M4 0L1 4l3 4M8 0L5 4l3 4" fill="none" stroke="#3f5560"/></svg></button>
                    </div>
                    <div class="my-[5px] flex flex-1 items-stretch border border-[#66828e] bg-[#9cb9c6]">
                        <button aria-label="Reculer" class="flex w-3.5 items-center justify-center border-r border-[#66828e] bg-[#b5d0dc]"><svg class="h-1.5 w-1"><path d="M4 0v6L0 3z"/></svg></button>
                        <div class="flex-1"></div>
                        <div class="border-l border-[#66828e] bg-linear-to-b from-[#bcd8e4] to-[#a3c1ce]" style="width:${p.thumb}px"></div>
                        <button aria-label="Avancer" class="flex w-3.5 items-center justify-center border-l border-[#66828e] bg-[#b5d0dc]"><svg class="h-1.5 w-1"><path d="M0 0v6l4-3z"/></svg></button>
                    </div>
                    <div class="flex items-center gap-[7px] pr-0.5 pl-1.5">
                        <button aria-label="Ajuster">${icon('fit', 'h-[18px] w-[19px]')}</button>
                        <button aria-label="Zoom arrière">${icon('lens', 'h-[18px] w-[18px]')}</button>
                        <button aria-label="Zoom avant" class="pl-0.5">${icon('lens-plus', 'h-[18px] w-[18px]')}</button>
                        <button aria-label="Barre d'ordres">${icon('dock', 'h-3.5 w-[18px]')}</button>
                    </div>
                </div>
            </section>`;
        }

        const pens = {
            red: 'stroke="#e01010" stroke-width="2" stroke-dasharray="21 9"',
            darkred: 'stroke="#b81c1c" stroke-width="2" stroke-dasharray="21 9"',
            thick: 'stroke="#3ca535" stroke-width="2" stroke-dasharray="21 9"',
            thin: 'stroke="#3ca535" stroke-width="1" stroke-dasharray="20 8"',
            navy: 'stroke="#1a1aa0" stroke-width="1" stroke-dasharray="12 12"',
            black: 'stroke="#000" stroke-width="1"',
            purple: 'stroke="#68109f" stroke-width="2"',
            blue: 'stroke="#56b4e2" stroke-width="2"'
        };

        function fmt(v) {
            return String(v).replace(/(\d{3})$/, ' $1');
        }

        function drawChart(svg, p, n) {
            const W = svg.clientWidth, H = svg.clientHeight;
            const w = W - 68, h = H - 18;
            if (w < 1 || h < 1) return;
            const base = n % 2 ? 887 : 889;
            const kx = w / base, ky = h / p.h;
            const X = i => Math.round(3 + i * w / 111);
            const Y = v => Math.round(v * ky);
            let plot = '', out = '';

            p.zones.forEach(([x, a, b, c]) => {
                plot += `<rect x="${x * kx}" y="${Y(a)}" width="${w}" height="${Y(b) - Y(a)}" fill="${c}"/>`;
            });

            let i = 0;
            p.bars.forEach(part => part.d.split(',').forEach(row => {
                const [dir, ...v] = row.split(' ');
                const [hi, top, bot, lo] = v.map(q => Math.round((part.y0 + q / part.k) * ky));
                const edge = dir === 'u' ? '#0b5a80' : '#a83232';
                const fill = dir === 'u' ? '#1398cf' : '#fa6e6e';
                const x = X(i++);
                plot += `<rect x="${x}" y="${hi}" width="1" height="${Math.max(lo - hi, 1)}" fill="${edge}"/>`;
                plot += `<rect x="${x - 2}" y="${top}" width="5" height="${Math.max(bot - top, 1)}" fill="${edge}"/>`;
                if (bot - top > 2) plot += `<rect x="${x - 1}" y="${top + 1}" width="3" height="${bot - top - 2}" fill="${fill}"/>`;
            }));

            p.levels.forEach(([pen, from, y, mid, right]) => {
                const x = from * kx;
                plot += `<path d="M${x} ${Y(y)}H${w}" fill="none" ${pens[pen]}/>`;
                if (mid) plot += `<text x="${(x + w) / 2}" y="${Y(y) - 4}" text-anchor="middle">${mid}</text>`;
                if (right) plot += `<text x="${w - 4}" y="${Y(y) - 4}" text-anchor="end">${right}</text>`;
            });
            // bord gauche des boîtes qui ne partent pas du début
            p.zones.filter(z => z[0] > 0).forEach(([x, a, b]) => {
                plot += `<path d="M${x * kx} ${Y(a)}V${Y(b)}" stroke="#000"/>`;
            });

            const yc = Y(p.close);
            plot += `<text x="8" y="${yc - 4}">Clo M</text><text x="0" y="${h - 3}">IT-Finance.com - Temps Réel</text>`;
            out += `<svg width="${w}" height="${h}" overflow="hidden" shape-rendering="crispEdges">${plot}</svg>`;
            out += `<path d="M0 ${yc}H${w + 5}" stroke="#000" stroke-dasharray="4 3" shape-rendering="crispEdges"/>`;
            out += `<path d="M0 ${h}H${w}V0" fill="none" stroke="#6f8a95" shape-rendering="crispEdges"/>`;

            for (let v = p.axis.from; v >= p.axis.to; v -= p.axis.step) {
                const y = Y(p.axis.y + (p.axis.from - v) * p.axis.px);
                const bold = p.axis.bold.includes(v);
                out += `<path d="M${w} ${y}h5" stroke="#6f8a95" shape-rendering="crispEdges"/>`;
                // le libellé caché par l'étiquette du cours n'est pas dessiné
                if (y > yc - 30 && y < yc + 3) continue;
                out += `<text x="${w + 7}" y="${y + 4}" class="${bold ? 'text-[12px] font-bold' : 'text-[11px]'}">${fmt(v)}</text>`;
            }
            for (let t = 13; t <= 21; t++) {
                const x = X(8 + (t - 13) * 12);
                out += `<path d="M${x} ${h}v3" stroke="#6f8a95" shape-rendering="crispEdges"/><text x="${x + 1}" y="${h + 14}" text-anchor="middle">${t}:00</text>`;
            }

            // étiquettes du dernier cours
            const x = w + 5;
            out += `<rect x="${x + .5}" y="${yc - .5}" width="45" height="15" fill="#f4f6fb" stroke="#6f8a95"/><text x="${x + 2}" y="${yc + 11}">${p.lastFull}</text>`;
            out += `<rect x="${x}" y="${yc - 5}" width="35" height="15" fill="#90e890"/><text x="${x + 1}" y="${yc + 6}">2m12s</text>`;
            out += `<rect x="${x + .5}" y="${yc - 25.5}" width="62" height="20" fill="#f9cf14" stroke="#7f8a6a"/>`;
            out += `<text x="${x + 2}" y="${yc - 10}" class="text-[15px]">${p.last[0]}<tspan dy="-3" class="text-[11px]">${p.last[1]}</tspan></text>`;
            svg.innerHTML = out;
        }

        desk.innerHTML = panels.map(panelHtml).join('');

        // chaque graphique est redessiné dès que sa taille change
        const charts = [...document.querySelectorAll('.chart')];
        const observer = new ResizeObserver(entries => entries.forEach(e => {
            const n = charts.indexOf(e.target);
            drawChart(e.target, panels[n], n);
        }));
        charts.forEach(svg => observer.observe(svg));
    </script>
</body>
</html>
